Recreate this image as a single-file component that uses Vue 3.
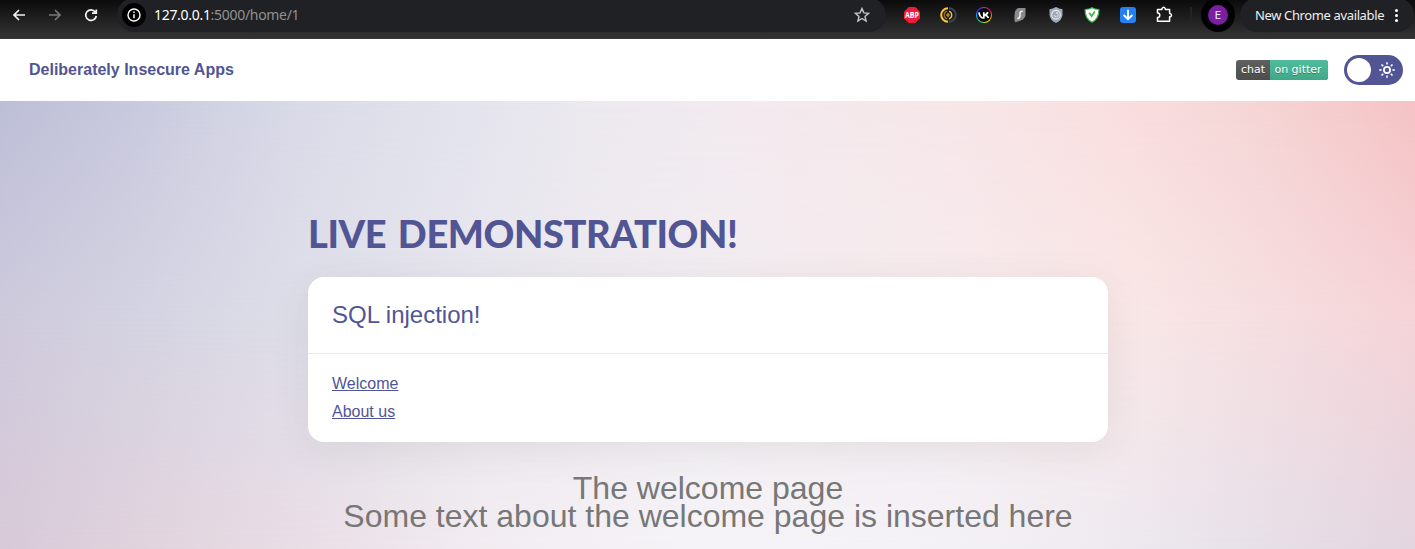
<script setup>
const links = ['Welcome', 'About us']
const rays = [0, 45, 90, 135, 180, 225, 270, 315]
</script>

<template>
  <div class="screen">
    <div class="toolbar">
      <div class="row">
        <div class="nav">
          <svg width="36" height="30" viewBox="0 0 36 30" class="line"><path d="M25 15H14M19 10L14 15L19 20" /></svg>
          <svg width="36" height="30" viewBox="0 0 36 30" class="line dim"><path d="M13 15H24M19 10L24 15L19 20" /></svg>
          <svg width="36" height="30" viewBox="0 0 36 30" class="line"><path d="M23.3 11.9A5.3 5.3 0 1 0 24.3 16M24.3 9.5V13.2H20" /></svg>
        </div>
        <div class="address">
          <span class="info">
            <svg width="24" height="24" viewBox="0 0 24 24"><circle cx="12" cy="12" r="6" fill="none" stroke="#fff" stroke-width="1.4" /><path d="M12 11.2V15.2M12 8.6V10" stroke="#fff" stroke-width="1.5" /></svg>
          </span>
          <span class="url"><b>127.0.0.1</b>:5000/home/1</span>
          <svg class="star" width="16" height="16" viewBox="0 0 16 16"><path d="M8 1.5L9.9 5.9L14.6 6.3L11 9.4L12.1 14L8 11.5L3.9 14L5 9.4L1.4 6.3L6.1 5.9Z" fill="none" stroke="#c7c7c7" stroke-width="1.4" /></svg>
        </div>
        <div class="extensions">
          <svg viewBox="0 0 16 16"><path d="M4.7 0H11.3L16 4.7V11.3L11.3 16H4.7L0 11.3V4.7Z" fill="#ef1b3d" /><text x="8" y="11.2" text-anchor="middle" textLength="14" lengthAdjust="spacingAndGlyphs" class="abp">ABP</text></svg>
          <svg viewBox="0 0 16 16" fill="none"><path d="M8 1.2A6.8 6.8 0 0 0 8 14.8" stroke="#fdc72f" stroke-width="2" /><path d="M9 1.2A6.8 6.8 0 0 1 9 14.8" stroke="#34465a" stroke-width="2" /><path d="M7 4.2A4 4 0 0 0 7 11.8" stroke="#8e7432" stroke-width="1.3" /><path d="M9 4.2A4 4 0 0 1 9 11.8" stroke="#fdc72f" stroke-width="1.3" /><path d="M8 5.4L10 8L8 10.6L6 8Z" fill="#a98633" /></svg>
          <span class="vk"><svg viewBox="0 0 14 14"><path d="M2 4.3C2.4 8.2 4.2 10 6.8 10V4.3M6.8 7.2C9 7 10.3 5.7 10.9 4.1M7 7.1C9.2 7.1 10.7 8.3 11.5 10" fill="none" stroke="#fff" stroke-width="1.7" /></svg></span>
          <svg viewBox="0 0 16 16"><path d="M6.5 1H13.5V8Q13.5 13 3 15.3Q2 12 2.7 6Q3.3 1.8 6.5 1Z" fill="#888a8d" /><path d="M10.7 4.3C8.6 4.2 8 5 8 6.6V8.8C8 10.5 7.3 11.4 5.3 11.4" fill="none" stroke="#f4f4f4" stroke-width="1.5" /></svg>
          <svg viewBox="0 0 16 16"><path d="M8 0Q11 2 14.5 2.2V8Q14 13.3 8 16Q2 13.3 1.5 8V2.2Q5 2 8 0Z" fill="#a1a9b9" /><circle cx="8" cy="7.7" r="4.3" fill="none" stroke="#e6e9ee" stroke-width="1.1" /><path d="M6.2 8A2 2 0 1 0 8 5.8H10" fill="none" stroke="#d9dde4" stroke-width="1" /></svg>
          <svg viewBox="0 0 16 16"><path d="M8 .7Q10.7 2.4 14.9 2.5Q15.2 11.5 8 15.3Q.8 11.5 1.1 2.5Q5.3 2.4 8 .7Z" fill="#fff" stroke="#3cb64a" stroke-width="1.2" /><path d="M5.2 5.7L7.6 9.2L10.8 4.5" fill="none" stroke="#3cb64a" stroke-width="1.7" /></svg>
          <svg viewBox="0 0 16 16"><rect width="16" height="16" rx="3" fill="#2481f5" /><path d="M8 2.7V12M3.6 8L8 12.2L12.4 8" fill="none" stroke="#fff" stroke-width="1.9" /></svg>
          <svg viewBox="0 0 16 16"><path d="M1.5 2.4H5.9V1.6Q7.8-.9 9.3 1.6V2.4H13.6V6.5H14.3Q16.7 8.2 14.3 9.8H13.6V14.3H1.5V10.5Q3.8 10.5 3.8 8.2Q3.8 6 1.5 6Z" fill="none" stroke="#fff" stroke-width="1.5" stroke-linejoin="round" /></svg>
        </div>
        <span class="divider"></span>
        <span class="profile"><span>E</span></span>
        <div class="update"><span>New Chrome available</span><i></i></div>
      </div>
    </div>

    <header class="site">
      <a class="brand">Deliberately Insecure Apps</a>
      <div class="tools">
        <div class="badge"><span>chat</span><span class="green">on gitter</span></div>
        <div class="toggle">
          <span class="knob"></span>
          <svg width="16" height="16" viewBox="-8 -8 16 16" fill="none" stroke="#fff">
            <circle r="3.1" stroke-width="1.8" />
            <path v-for="r in rays" :key="r" d="M0-5.4V-7.8" stroke-width="1.6" :transform="`rotate(${r})`" />
          </svg>
        </div>
      </div>
    </header>

    <main>
      <h1>LIVE DEMONSTRATION!</h1>
      <section class="card">
        <h2>SQL injection!</h2>
        <nav><div v-for="l in links" :key="l"><a>{{ l }}</a></div></nav>
      </section>
      <p class="result">The welcome page<br />Some text about the welcome page is inserted here</p>
    </main>
  </div>
</template>

<style>
body { margin: 0; overflow: hidden; }
</style>

<style scoped>
* { box-sizing: border-box; }
.screen { width: 1415px; height: 549px; overflow: hidden; display: flex; flex-direction: column; font-family: "Liberation Sans", Arial, sans-serif; color: #515594; }
.toolbar { height: 39px; flex: none; overflow: hidden; background: linear-gradient(#0b0b0b, #303030 90%); border-bottom: 1px solid #393638; }
.row { height: 34px; margin-top: -2px; display: flex; align-items: center; font-family: "Noto Sans", sans-serif; }
.nav { display: flex; width: 117px; }
.line { fill: none; stroke: #f2f2f2; stroke-width: 1.7; }
.dim { stroke: #777; }
.address { width: 769px; height: 34px; border-radius: 17px; background: #202124; display: flex; align-items: center; padding: 0 16px 0 5px; }
.info { width: 24px; height: 24px; border-radius: 50%; background: #000; }
.info svg { display: block; }
.url { margin-left: 8px; font-size: 14px; line-height: 20px; color: #909193; letter-spacing: -.3px; }
.url b { font-weight: 400; color: #fff; }
.star { margin-left: auto; }
.extensions { display: flex; gap: 20px; margin-left: 18px; }
.extensions > svg, .vk { width: 16px; height: 16px; display: block; overflow: visible; }
.abp { font: bold 8.5px "Open Sans", sans-serif; fill: #fff; }
.vk { border-radius: 50%; padding: 1px; background: conic-gradient(#8d3cff, #f03, #f90, #fe0, #2d6, #0cf, #33f, #8d3cff); }
.vk svg { display: block; width: 14px; height: 14px; background: #08080a; border-radius: 50%; }
.divider { width: 2px; height: 16px; margin-left: 18px; background: #232323; }
.profile { width: 34px; height: 34px; border-radius: 50%; background: #000; margin-left: 9px; display: flex; align-items: center; justify-content: center; }
.profile span { width: 20px; height: 20px; border-radius: 50%; background: #7b1fa2; color: #eee; font: 11px/21px Roboto, sans-serif; text-align: center; }
.update { margin-left: 5px; width: 174px; height: 34px; background: #202124; border-radius: 17px; display: flex; align-items: center; padding-left: 15px; color: #eee; font-size: 13px; white-space: nowrap; }
.update span { width: 130px; letter-spacing: -.37px; }
.update i { width: 3px; height: 3px; border-radius: 50%; margin-left: 10px; background: #fff; box-shadow: 0 -5px #fff, 0 5px #fff; }

.site { height: 62px; flex: none; background: #fff; display: flex; align-items: center; justify-content: space-between; padding: 0 12px 0 29px; }
.brand { font-size: 16px; font-weight: 700; line-height: 20px; }
.tools { display: flex; align-items: center; gap: 16px; }
.badge { display: flex; height: 20px; width: 92px; border-radius: 3px; overflow: hidden; font: 11px/20px "DejaVu Sans", Verdana, sans-serif; color: #fff; text-shadow: 0 1px rgba(1, 1, 1, .3); background: linear-gradient(#606060, #4d4d4d); white-space: nowrap; }
.badge span { width: 34px; text-align: center; }
.badge .green { width: 58px; padding-right: 2px; background: linear-gradient(#51bd9d, #3fa887); }
.toggle { width: 59px; height: 30px; border-radius: 15px; background: #515594; display: flex; align-items: center; justify-content: space-between; padding: 0 8px 0 3px; }
.knob { width: 24px; height: 24px; border-radius: 50%; background: #fff; }

/* Three horizontal colour bands, blended vertically with masks. */
main { flex: 1; position: relative; isolation: isolate; padding: 108px 307px 0 308px;
  background: linear-gradient(90deg, #bdbfd8, #c8c9de 130px, #dadbe8 300px, #e3e3ed 450px, #edeaf0 600px, #f3eaef 740px, #f7e7e9 950px, #fadfe0 1110px, #f6d6d6 1250px, #f5c3c5); }
main::before, main::after { content: ""; position: absolute; inset: 0; z-index: -1; }
main::before {
  background: linear-gradient(90deg, #cecadc, #d5d4e2 150px, #dedee9 300px, #e9e7ee 480px, #f1edf1 700px, #f7ebed 950px, #f9e7e7 1130px, #f6dfe1 1260px, #f5d4d8);
  mask-image: linear-gradient(transparent, #000 50%); }
main::after {
  background: linear-gradient(90deg, #d8c9d8, #e1d3dd 150px, #e9dde6 300px, #f2ecf1 480px, #f5f3f7 700px, #f3f1f6 950px, #eeeaf0 1110px, #e7e0e9 1250px, #e2d5e0);
  mask-image: linear-gradient(transparent 48%, #000); }
h1 { margin: 0; height: 68px; font: 900 38px/48px Lato, sans-serif; white-space: nowrap; letter-spacing: -.4px; word-spacing: 3px; }
.card { width: 800px; height: 165px; background: #fff; border-radius: 16px; box-shadow: 0 8px 40px rgba(70, 70, 60, .09); }
h2 { margin: 0; height: 77px; padding: 24px 24px 0; border-bottom: 1px solid #eaeaec; font: 24px/28px "Liberation Sans", Arial, sans-serif; }
nav { padding: 16px 24px; font-size: 16px; line-height: 28px; }
nav a { text-decoration: underline; }
.result { margin: 32px 0 0; text-align: center; font-size: 32px; line-height: 28px; color: #777; white-space: nowrap; }
</style>
